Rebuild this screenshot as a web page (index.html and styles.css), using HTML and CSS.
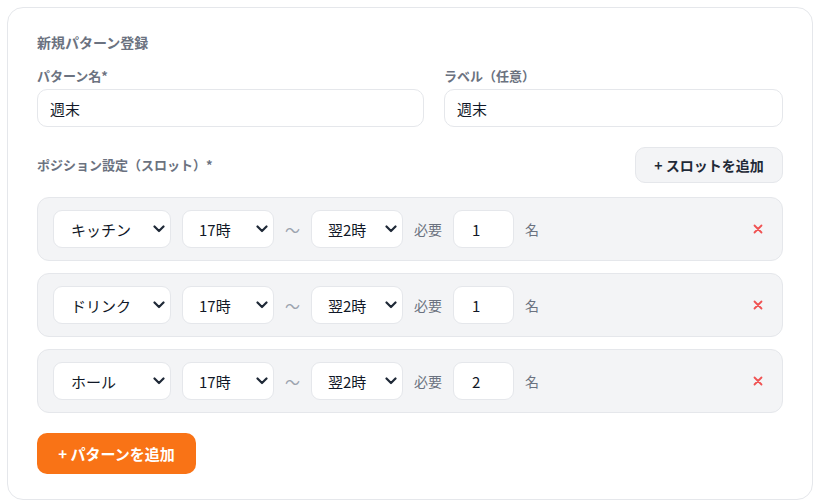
FILE: index.html
```html
<!DOCTYPE html>
<html lang="ja">
<head>
<meta charset="utf-8">
<link rel="stylesheet" href="styles.css">
</head>
<body>
<div class="card">
  <div class="title">新規パターン登録</div>
  <div class="fields">
    <div class="field">
      <label class="label">パターン名*</label>
      <div class="input">週末</div>
    </div>
    <div class="field">
      <label class="label">ラベル（任意）</label>
      <div class="input">週末</div>
    </div>
  </div>
  <div class="section-head">
    <span class="label">ポジション設定（スロット）*</span>
    <button class="btn-slot">+ スロットを追加</button>
  </div>
  <div class="slots">
    <div class="slot">
      <div class="select w-pos"><span>キッチン</span><svg class="chev" viewBox="0 0 12 8" width="12" height="8"><path d="M1.5 1.5 L6 6 L10.5 1.5" fill="none" stroke="#1f2937" stroke-width="2.2" stroke-linecap="round" stroke-linejoin="round"/></svg></div>
      <div class="select w-time"><span>17時</span><svg class="chev" viewBox="0 0 12 8" width="12" height="8"><path d="M1.5 1.5 L6 6 L10.5 1.5" fill="none" stroke="#1f2937" stroke-width="2.2" stroke-linecap="round" stroke-linejoin="round"/></svg></div>
      <span class="tilde">〜</span>
      <div class="select w-time"><span>翌2時</span><svg class="chev" viewBox="0 0 12 8" width="12" height="8"><path d="M1.5 1.5 L6 6 L10.5 1.5" fill="none" stroke="#1f2937" stroke-width="2.2" stroke-linecap="round" stroke-linejoin="round"/></svg></div>
      <span class="muted">必要</span>
      <div class="num">1</div>
      <span class="muted">名</span>
      <button class="remove"><svg viewBox="0 0 10 10" width="10" height="10"><path d="M1.5 1.5 L8.5 8.5 M8.5 1.5 L1.5 8.5" stroke="#f05252" stroke-width="1.8" stroke-linecap="round"/></svg></button>
    </div>
    <div class="slot">
      <div class="select w-pos"><span>ドリンク</span><svg class="chev" viewBox="0 0 12 8" width="12" height="8"><path d="M1.5 1.5 L6 6 L10.5 1.5" fill="none" stroke="#1f2937" stroke-width="2.2" stroke-linecap="round" stroke-linejoin="round"/></svg></div>
      <div class="select w-time"><span>17時</span><svg class="chev" viewBox="0 0 12 8" width="12" height="8"><path d="M1.5 1.5 L6 6 L10.5 1.5" fill="none" stroke="#1f2937" stroke-width="2.2" stroke-linecap="round" stroke-linejoin="round"/></svg></div>
      <span class="tilde">〜</span>
      <div class="select w-time"><span>翌2時</span><svg class="chev" viewBox="0 0 12 8" width="12" height="8"><path d="M1.5 1.5 L6 6 L10.5 1.5" fill="none" stroke="#1f2937" stroke-width="2.2" stroke-linecap="round" stroke-linejoin="round"/></svg></div>
      <span class="muted">必要</span>
      <div class="num">1</div>
      <span class="muted">名</span>
      <button class="remove"><svg viewBox="0 0 10 10" width="10" height="10"><path d="M1.5 1.5 L8.5 8.5 M8.5 1.5 L1.5 8.5" stroke="#f05252" stroke-width="1.8" stroke-linecap="round"/></svg></button>
    </div>
    <div class="slot">
      <div class="select w-pos"><span>ホール</span><svg class="chev" viewBox="0 0 12 8" width="12" height="8"><path d="M1.5 1.5 L6 6 L10.5 1.5" fill="none" stroke="#1f2937" stroke-width="2.2" stroke-linecap="round" stroke-linejoin="round"/></svg></div>
      <div class="select w-time"><span>17時</span><svg class="chev" viewBox="0 0 12 8" width="12" height="8"><path d="M1.5 1.5 L6 6 L10.5 1.5" fill="none" stroke="#1f2937" stroke-width="2.2" stroke-linecap="round" stroke-linejoin="round"/></svg></div>
      <span class="tilde">〜</span>
      <div class="select w-time"><span>翌2時</span><svg class="chev" viewBox="0 0 12 8" width="12" height="8"><path d="M1.5 1.5 L6 6 L10.5 1.5" fill="none" stroke="#1f2937" stroke-width="2.2" stroke-linecap="round" stroke-linejoin="round"/></svg></div>
      <span class="muted">必要</span>
      <div class="num">2</div>
      <span class="muted">名</span>
      <button class="remove"><svg viewBox="0 0 10 10" width="10" height="10"><path d="M1.5 1.5 L8.5 8.5 M8.5 1.5 L1.5 8.5" stroke="#f05252" stroke-width="1.8" stroke-linecap="round"/></svg></button>
    </div>
  </div>
  <button class="btn-add">+ パターンを追加</button>
</div>
</body>
</html>
```

FILE: styles.css
```css
* { box-sizing: border-box; }
html, body { margin: 0; padding: 0; background: #ffffff; }
body {
  padding: 7px;
  font-family: "Noto Sans CJK JP", "Noto Sans", sans-serif;
  color: #111827;
}
.card {
  border: 1px solid #e5e7eb;
  border-radius: 16px;
  padding: 25px 29px;
  background: #fff;
}
.title {
  font-size: 14px;
  line-height: 18px;
  font-weight: 700;
  color: #6b7280;
}
.fields {
  margin-top: 16px;
  display: grid;
  grid-template-columns: 387fr 339fr;
  column-gap: 20px;
}
.field { display: flex; flex-direction: column; }
.label {
  display: block;
  font-size: 13px;
  line-height: 18px;
  font-weight: 700;
  color: #6b7280;
}
.input {
  margin-top: 4px;
  height: 38px;
  border: 1px solid #e5e7eb;
  border-radius: 10px;
  padding: 0 12px;
  font-size: 15px;
  display: flex;
  align-items: center;
  color: #111827;
}
.section-head {
  margin-top: 20px;
  display: flex;
  align-items: center;
  justify-content: space-between;
}
.btn-slot {
  height: 36px;
  width: 148px;
  border: 1px solid #e5e7eb;
  background: #f3f4f6;
  border-radius: 10px;
  font-family: inherit;
  font-size: 14px;
  font-weight: 700;
  color: #1f2937;
  padding: 0;
}
.slots {
  margin-top: 14px;
  display: flex;
  flex-direction: column;
  gap: 12px;
}
.slot {
  height: 64px;
  background: #f3f4f6;
  border: 1px solid #e5e7eb;
  border-radius: 12px;
  padding: 12px 15px;
  display: flex;
  align-items: center;
  gap: 11px;
}
.select {
  height: 38px;
  background: #fff;
  border: 1px solid #e5e7eb;
  border-radius: 9px;
  padding: 0 5px 0 17px;
  display: flex;
  align-items: center;
  justify-content: space-between;
  font-size: 15px;
  color: #111827;
}
.w-pos { width: 118px; }
.w-time { width: 92px; padding-left: 16px; }
.chev { display: block; }
.tilde {
  font-size: 15px;
  color: #9ca3af;
  width: 15px;
  text-align: center;
}
.muted {
  font-size: 14px;
  color: #6b7280;
}
.num {
  width: 61px;
  height: 38px;
  background: #fff;
  border: 1px solid #e5e7eb;
  border-radius: 9px;
  padding: 0 18px;
  display: flex;
  align-items: center;
  font-size: 15px;
  color: #111827;
}
.remove {
  margin-left: auto;
  width: 18px;
  height: 18px;
  border: 0;
  background: transparent;
  padding: 0;
  display: flex;
  align-items: center;
  justify-content: center;
}
.btn-add {
  margin-top: 20px;
  height: 41px;
  width: 159px;
  border: 0;
  border-radius: 10px;
  background: #f97316;
  color: #fff;
  font-family: inherit;
  font-size: 15px;
  font-weight: 700;
  padding: 0;
}
```
